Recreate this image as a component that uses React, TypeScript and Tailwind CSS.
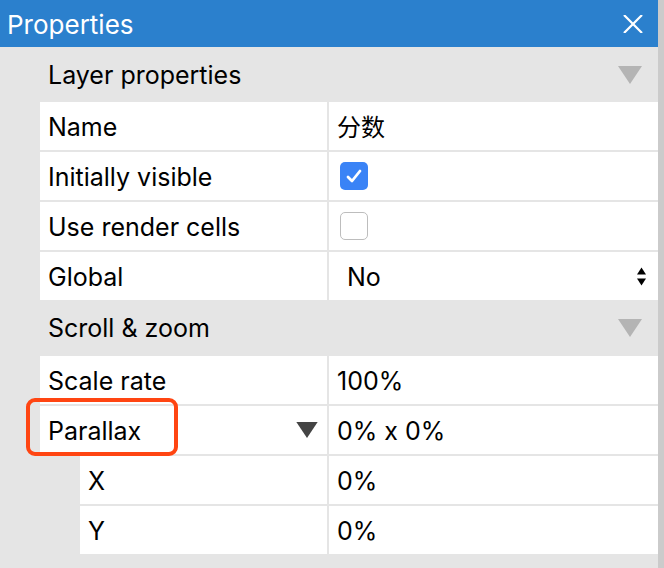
import { ReactNode } from "react";

const font = { fontFamily: "Inter, 'Noto Sans CJK SC', sans-serif" };

function Triangle({ className }: { className: string }) {
  return (
    <svg viewBox="0 0 24 18" className={className}>
      <path d="M0 0 H24 L12 18 Z" fill="currentColor" />
    </svg>
  );
}

function SectionHeader({ title, h }: { title: string; h: string }) {
  return (
    <div className={`flex items-center justify-between pl-12 pr-4 ${h}`}>
      <span className="pt-[2px] text-[25px] text-black">{title}</span>
      <Triangle className="w-6 h-[18px] text-[#b4b4b4]" />
    </div>
  );
}

function Row({ label, children, indent = false, extra }: { label: string; children: ReactNode; indent?: boolean; extra?: ReactNode }) {
  return (
    <div className="flex h-12 gap-[2px]">
      <div className={`flex items-center justify-between bg-white pl-2 pr-2 ${indent ? "ml-10 w-[247px]" : "w-[287px]"}`}>
        <span className="pt-[3px] text-[25px] text-black">{label}</span>
        {extra}
      </div>
      <div className="flex flex-1 items-center bg-white pl-2 pr-3">{children}</div>
    </div>
  );
}

export default function App() {
  return (
    <div className="flex w-[664px] h-[568px] overflow-hidden bg-[#e5e5e5]" style={font}>
      <div className="relative flex w-[658px] flex-col">
        {/* title bar */}
        <div className="flex h-[47px] items-center justify-between bg-[#2b80cd] pl-[7px] pr-[15px]">
          <span className="pt-[1px] text-[26px] text-white">Properties</span>
          <svg viewBox="0 0 20 18" className="w-5 h-[18px]">
            <path d="M1 0 L19 18 M19 0 L1 18" stroke="white" strokeWidth="2.2" />
          </svg>
        </div>

        <SectionHeader title="Layer properties" h="h-[55px]" />
        <div className="ml-10 flex flex-col gap-[2px]">
          <Row label="Name">
            <span className="pt-[3px] text-[24px] text-black">分数</span>
          </Row>
          <Row label="Initially visible">
            <div className="ml-[3px] flex h-7 w-7 items-center justify-center rounded-[5px] bg-[#3a83f6]">
              <svg viewBox="0 0 18 18" className="w-[18px] h-[18px]">
                <path d="M3 10 L7 14 L15 4" fill="none" stroke="white" strokeWidth="2.8" strokeLinecap="round" strokeLinejoin="round" />
              </svg>
            </div>
          </Row>
          <Row label="Use render cells">
            <div className="ml-[3px] h-7 w-7 rounded-[5px] border border-[#bdbdbd] bg-white" />
          </Row>
          <Row label="Global">
            <div className="flex flex-1 items-center justify-between pl-[10px]">
              <span className="pt-[3px] text-[25px] text-black">No</span>
              <div className="flex flex-col gap-[3px]">
                <svg viewBox="0 0 10 8" className="w-[9px] h-[8px]">
                  <path d="M0 8 L5 0 L10 8 Z" fill="black" />
                </svg>
                <svg viewBox="0 0 10 8" className="w-[9px] h-[8px]">
                  <path d="M0 0 L10 0 L5 8 Z" fill="black" />
                </svg>
              </div>
            </div>
          </Row>
        </div>

        <SectionHeader title="Scroll & zoom" h="h-[56px]" />
        <div className="ml-10 flex flex-col gap-[2px]">
          <Row label="Scale rate">
            <span className="pt-[3px] text-[25px] text-black">100%</span>
          </Row>
          <Row label="Parallax" extra={<Triangle className="w-6 h-4 text-[#444444]" />}>
            <span className="pt-[3px] text-[25px] text-black">0% x 0%</span>
          </Row>
          <Row label="X" indent>
            <span className="pt-[3px] text-[25px] text-black">0%</span>
          </Row>
          <Row label="Y" indent>
            <span className="pt-[3px] text-[25px] text-black">0%</span>
          </Row>
        </div>

        {/* highlight annotation */}
        <div className="absolute left-[26px] top-[398px] h-[58px] w-[152px] rounded-[9px] border-[4px] border-[#ff4512]" />
      </div>
      <div className="w-[6px] bg-[#cbcbcb]" />
    </div>
  );
}
